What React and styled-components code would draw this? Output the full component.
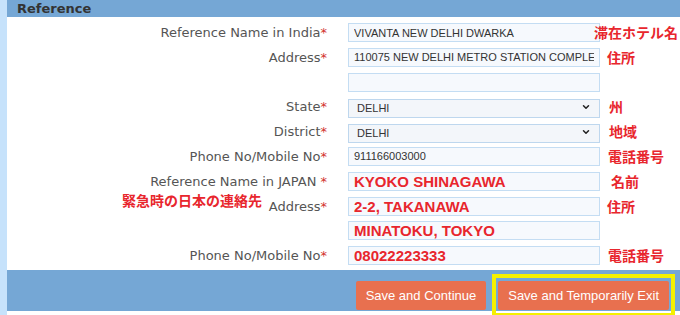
import styled, { createGlobalStyle } from 'styled-components';
import { ChevronDown } from 'lucide-react';

const GlobalStyle = createGlobalStyle`
  html, body {
    margin: 0;
    padding: 0;
    background: #fff;
  }
  body {
    font-family: "DejaVu Sans", Verdana, sans-serif;
  }
`;

const rows = [
  { label: 'Reference Name in India', value: 'VIVANTA NEW DELHI DWARKA', note: '滞在ホテル名', shift: -13 },
  { label: 'Address', value: '110075 NEW DELHI METRO STATION COMPLEX', note: '住所' },
  { value: '' },
  { label: 'State', select: 'DELHI', note: '州', shift: 2 },
  { label: 'District', select: 'DELHI', note: '地域', shift: 2 },
  { label: 'Phone No/Mobile No', value: '911166003000', note: '電話番号', shift: 1 },
  { label: 'Reference Name in JAPAN ', value: 'KYOKO SHINAGAWA', note: '名前', shift: 4, strong: true },
  { label: 'Address', value: '2-2, TAKANAWA', note: '住所', strong: true, overlay: '緊急時の日本の連絡先' },
  { value: 'MINATOKU, TOKYO', strong: true },
  { label: 'Phone No/Mobile No', value: '08022223333', note: '電話番号', shift: 1, strong: true },
];

const App = () => {
  return (
    <>
      <GlobalStyle />
      <Page>
        <SectionHeader>Reference</SectionHeader>
        <Form>
          {rows.map((row, i) => (
            <Row key={i}>
              <Label>
                {row.overlay && <LabelNote>{row.overlay}</LabelNote>}
                {row.label && (
                  <>
                    {row.label}
                    <Req>*</Req>
                  </>
                )}
              </Label>
              {row.select ? (
                <SelectWrap>
                  <Select defaultValue={row.select}>
                    <option>{row.select}</option>
                  </Select>
                  <Chevron size={10} strokeWidth={3.6} />
                </SelectWrap>
              ) : (
                <Input defaultValue={row.value} $strong={row.strong} />
              )}
              <Note $shift={row.shift || 0}>{row.note}</Note>
            </Row>
          ))}
        </Form>
        <ActionBar>
          <Button>Save and Continue</Button>
          <Highlight>
            <Button>Save and Temporarily Exit</Button>
          </Highlight>
        </ActionBar>
      </Page>
    </>
  );
};

const Page = styled.div`
  border-left: 7px solid #c6e2fb;
  box-sizing: border-box;
  height: 315px;
  overflow: hidden;
`;

const SectionHeader = styled.div`
  height: 17px;
  line-height: 17px;
  padding-left: 10px;
  background: #75a7d5;
  color: #333;
  font-size: 13px;
  font-weight: bold;
`;

const Form = styled.div`
  display: flex;
  flex-direction: column;
  gap: 5.8px;
  padding: 6px 0 5px;
`;

const Row = styled.div`
  display: grid;
  grid-template-columns: 341px 252px 1fr;
  align-items: center;
  height: 19px;
`;

const Label = styled.div`
  position: relative;
  text-align: right;
  padding-right: 21px;
  font-size: 13px;
  color: #555;
  white-space: nowrap;
`;

const Req = styled.span`
  color: #d2322d;
`;

const LabelNote = styled.span`
  position: absolute;
  right: 86px;
  top: -6px;
  font-family: "Noto Sans CJK JP", sans-serif;
  font-weight: bold;
  font-size: 14px;
  line-height: 14px;
  color: #e8262d;
`;

const Input = styled.input`
  box-sizing: border-box;
  width: 252px;
  height: 19px;
  padding: 0 5px;
  border: 1px solid #c4ddf3;
  background: #f6f9fd;
  outline: none;
  font-family: "Liberation Sans", Arial, sans-serif;
  font-size: ${(p) => (p.$strong ? '15px' : '11px')};
  font-weight: ${(p) => (p.$strong ? 'bold' : 'normal')};
  color: ${(p) => (p.$strong ? '#e8262d' : '#333')};
`;

const SelectWrap = styled.div`
  position: relative;
  width: 252px;
  height: 19px;
`;

const Select = styled.select`
  appearance: none;
  box-sizing: border-box;
  width: 252px;
  height: 19px;
  padding: 0 8px;
  border: 1px solid #bed7ee;
  border-radius: 0;
  background: #f3f6fa;
  outline: none;
  font-family: "Liberation Sans", Arial, sans-serif;
  font-size: 11px;
  color: #333;
`;

const Chevron = styled(ChevronDown)`
  position: absolute;
  right: 9px;
  top: 5px;
  color: #222;
  pointer-events: none;
`;

const Note = styled.div`
  padding-left: 7px;
  margin-left: ${(p) => p.$shift}px;
  font-family: "Noto Sans CJK JP", sans-serif;
  font-weight: bold;
  font-size: 14px;
  line-height: 19px;
  color: #e8262d;
  white-space: nowrap;
`;

const ActionBar = styled.div`
  display: flex;
  justify-content: flex-end;
  align-items: flex-start;
  gap: 6px;
  height: 41px;
  box-sizing: border-box;
  padding: 4px 5px 0 0;
  background: #75a7d5;
  & > button {
    margin-top: 7px;
  }
`;

const Highlight = styled.div`
  border: 4px solid #f5f000;
  padding: 3px 2px;
  flex-shrink: 0;
`;

const Button = styled.button`
  height: 29px;
  padding: 0 10px;
  border: none;
  border-radius: 2px;
  background: #e8704f;
  color: #fff;
  font-family: "Liberation Sans", Arial, sans-serif;
  font-size: 13px;
  white-space: nowrap;
  cursor: pointer;
`;

export default App;
